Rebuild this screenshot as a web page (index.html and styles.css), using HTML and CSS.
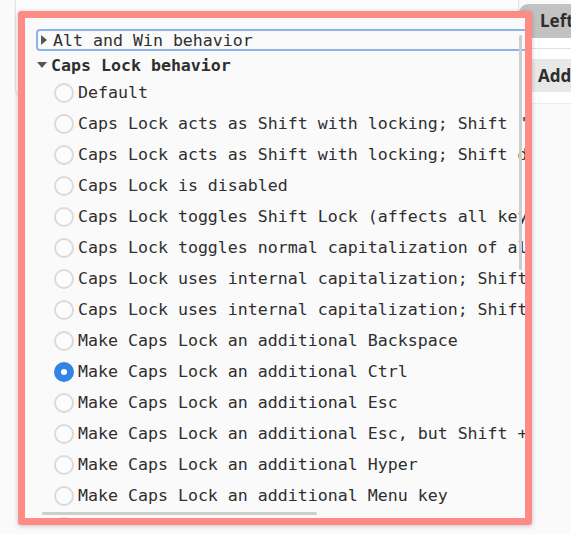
FILE: index.html
```html
<!DOCTYPE html>
<html lang="en">
<head>
    <meta charset="UTF-8">
    <meta name="viewport" content="width=device-width, initial-scale=1.0">
    <title>Keyboard options</title>
    <link rel="stylesheet" href="styles.css">
</head>
<body>
    <div class="backdrop">
        <div class="card"></div>
        <div class="sidebar">
            <div class="tab">Left</div>
            <div class="sidebar-body">
                <div class="sep"></div>
                <div class="add-row">Add:</div>
            </div>
        </div>
    </div>

    <div class="popover">
        <div class="scroller">
            <div class="tree">
                <div class="group-row focused">
                    <span class="arrow-right"></span>
                    <span class="group-name">Alt and Win behavior</span>
                </div>
                <div class="group-row open">
                    <span class="arrow-down"></span>
                    <span class="group-name bold">Caps Lock behavior</span>
                </div>
                <div class="option"><span class="radio"></span>Default</div>
                <div class="option"><span class="radio"></span>Caps Lock acts as Shift with locking; Shift "pauses" Caps Lock</div>
                <div class="option"><span class="radio"></span>Caps Lock acts as Shift with locking; Shift doesn't affect Caps Lock</div>
                <div class="option"><span class="radio"></span>Caps Lock is disabled</div>
                <div class="option"><span class="radio"></span>Caps Lock toggles Shift Lock (affects all keys)</div>
                <div class="option"><span class="radio"></span>Caps Lock toggles normal capitalization of alphabetic characters</div>
                <div class="option"><span class="radio"></span>Caps Lock uses internal capitalization; Shift "pauses" Caps Lock</div>
                <div class="option"><span class="radio"></span>Caps Lock uses internal capitalization; Shift doesn't affect Caps Lock</div>
                <div class="option"><span class="radio"></span>Make Caps Lock an additional Backspace</div>
                <div class="option"><span class="radio checked"></span>Make Caps Lock an additional Ctrl</div>
                <div class="option"><span class="radio"></span>Make Caps Lock an additional Esc</div>
                <div class="option"><span class="radio"></span>Make Caps Lock an additional Esc, but Shift + Caps Lock is the regular Caps Lock</div>
                <div class="option"><span class="radio"></span>Make Caps Lock an additional Hyper</div>
                <div class="option"><span class="radio"></span>Make Caps Lock an additional Menu key</div>
                <div class="option"><span class="radio"></span>Make Caps Lock an additional Num Lock</div>
            </div>
            <div class="vbar"></div>
            <div class="hbar"></div>
        </div>
    </div>
</body>
</html>
```

FILE: styles.css
```css
body {
    margin: 0;
    background: #fafafa;
    font-family: "DejaVu Sans Mono", "Liberation Mono", monospace;
    color: #2f2f2f;
    overflow: hidden;
}

/* window content behind the popover */
.backdrop {
    display: flex;
    height: 534px;
}

.card {
    margin-left: 15px;
    width: 502px;
    height: 96px;
    flex-shrink: 0;
    background: #fcfcfc;
    border: 1px solid #e2e2e2;
    border-top: none;
    border-bottom-left-radius: 8px;
    box-shadow: 0 1px 2px rgba(0, 0, 0, 0.06);
}

.sidebar {
    flex: 1;
    font-family: "Noto Sans", "Open Sans", sans-serif;
    font-weight: bold;
    font-size: 17px;
    color: #2e2e2e;
}

.tab {
    margin-top: 4px;
    height: 34px;
    line-height: 34px;
    padding-left: 21px;
    background: #c2c2c2;
    border-top-left-radius: 9px;
}

.sidebar-body {
    background: #ffffff;
    padding: 10px 0 11px;
    border-bottom: 1px solid #ececec;
}

.sep {
    height: 1px;
    background: #e0e0e0;
    margin-bottom: 10px;
}

.add-row {
    height: 33px;
    line-height: 33px;
    padding-left: 19px;
    background: #e8e8e8;
}

/* the highlighted dropdown */
.popover {
    position: absolute;
    left: 18px;
    top: 11px;
    width: 514px;
    height: 514px;
    box-sizing: border-box;
    border: 7px solid #ff8b87;
    border-radius: 3px;
    box-shadow: 0 1px 5px rgba(0, 0, 0, 0.22);
    background: #fafafa;
}

.scroller {
    position: relative;
    height: 100%;
    overflow: hidden;
}

.tree {
    width: 800px;
    padding-top: 11px;
    padding-left: 11px;
    font-size: 16.6px;
}

.group-row {
    display: flex;
    align-items: center;
    white-space: nowrap;
}

.group-row.focused {
    height: 22px;
    box-sizing: border-box;
    border: 2px solid #8cb4ea;
    border-radius: 4px;
    padding-left: 2px;
    margin-bottom: 2px;
}

.group-row.open {
    height: 24px;
    padding-left: 1px;
}

.arrow-right {
    width: 0;
    height: 0;
    border-top: 5px solid transparent;
    border-bottom: 5px solid transparent;
    border-left: 6px solid #555;
    margin-left: 1px;
    margin-right: 6px;
}

.arrow-down {
    width: 0;
    height: 0;
    border-left: 5px solid transparent;
    border-right: 5px solid transparent;
    border-top: 6px solid #555;
    margin-right: 4px;
}

.bold {
    font-weight: bold;
}

.option {
    display: flex;
    align-items: center;
    height: 31px;
    padding-left: 18px;
    white-space: nowrap;
}

.radio {
    width: 20px;
    height: 20px;
    box-sizing: border-box;
    border: 2px solid #dadada;
    border-radius: 50%;
    background: #fcfcfc;
    margin-right: 4px;
    flex-shrink: 0;
    position: relative;
}

.radio.checked {
    background: #3584e4;
    border-color: #3584e4;
}

.radio.checked::after {
    content: "";
    position: absolute;
    left: 5px;
    top: 5px;
    width: 6px;
    height: 6px;
    border-radius: 50%;
    background: #ffffff;
}

.vbar {
    position: absolute;
    left: 494px;
    top: 17px;
    width: 3px;
    height: 235px;
    border-radius: 2px;
    background: #cdcdcd;
}

.hbar {
    position: absolute;
    left: 17px;
    top: 494px;
    width: 275px;
    height: 3px;
    border-radius: 2px;
    background: #cdcdcd;
}
```
